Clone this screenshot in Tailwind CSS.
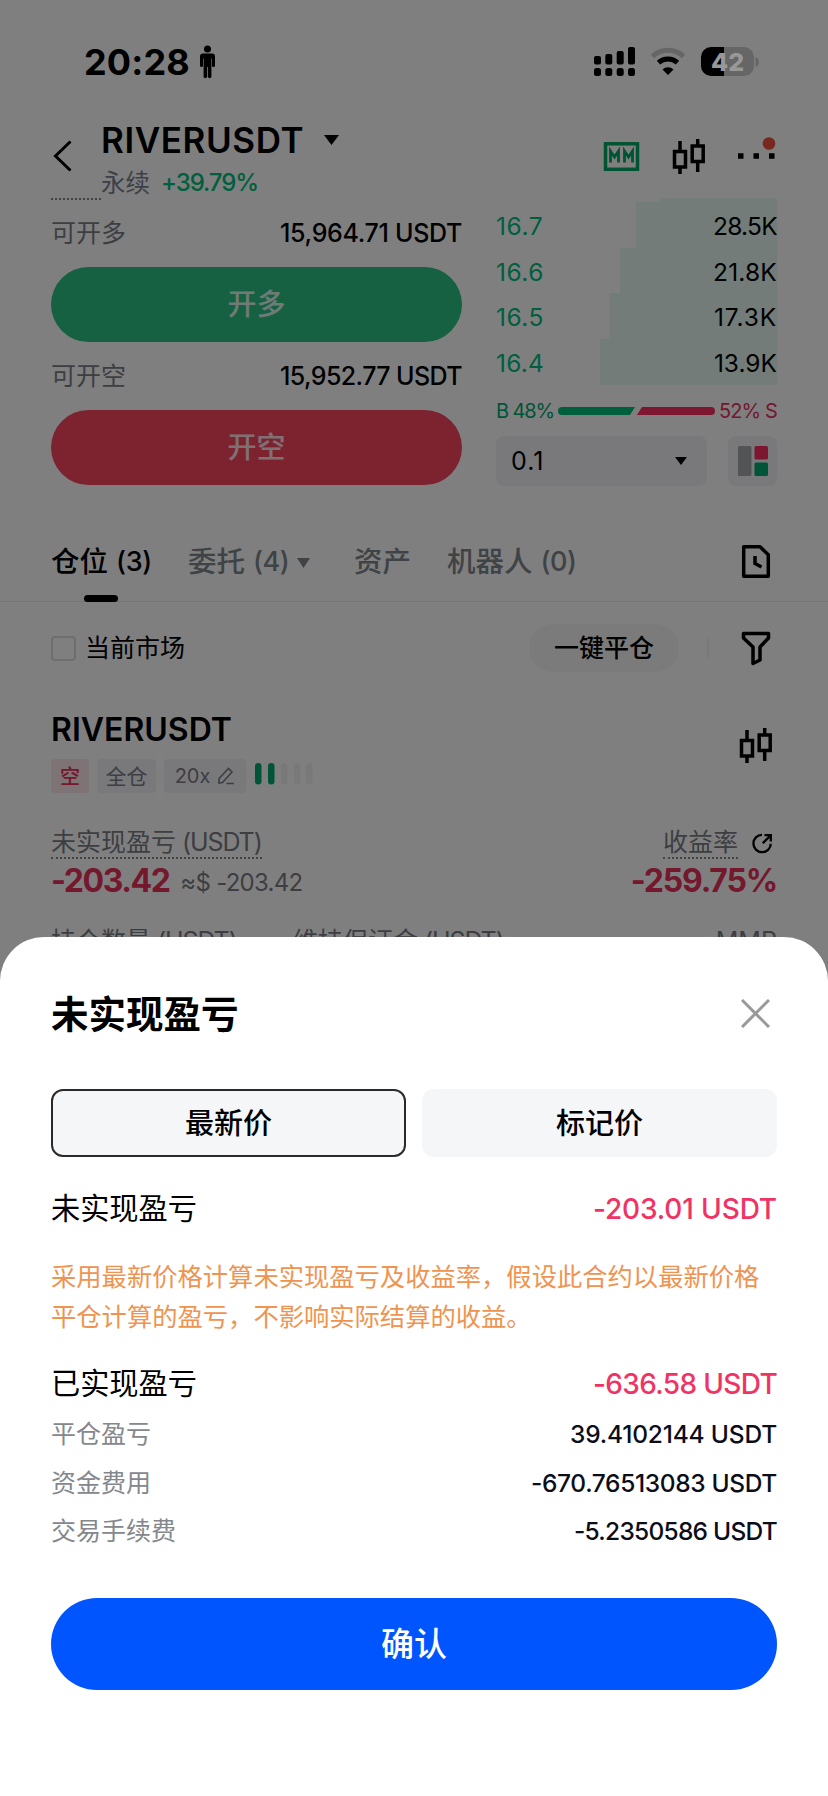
<!DOCTYPE html>
<html lang="zh-CN">
<head>
<meta charset="utf-8">
<title>RIVERUSDT</title>
<script src="https://cdn.jsdelivr.net/npm/@tailwindcss/browser@4"></script>
</head>
<body class="bg-white">
<div class="relative h-[1796px] w-[828px] overflow-hidden bg-white font-['Inter','Noto_Sans_CJK_SC',sans-serif] whitespace-nowrap text-black">

  <!-- Trading page -->
  <div class="flex h-[1000px] flex-col overflow-hidden">

    <!-- Status bar -->
    <div class="relative z-10 flex h-[110px] shrink-0 items-start pt-[42px] pl-[84px] pr-[69px]">
      <span class="text-[36px] leading-[40px] font-bold tracking-[0.18px]">20:28</span>
      <svg class="absolute left-[199px] top-[45px]" width="17" height="35" viewBox="0 0 17 35"><circle cx="8.500" cy="4" r="3.500"/><path d="M4 8.500h9a3 3 0 0 1 3 3v9a1.500 1.500 0 0 1-3 0v-7h-.6V32a1.900 1.900 0 0 1-3.500 0V22h-.8v10a1.900 1.900 0 0 1-3.500 0V13.500H4v7a1.500 1.500 0 0 1-3 0v-9a3 3 0 0 1 3-3z"/></svg>
      <svg class="ml-auto mt-[4px]" width="166" height="34" viewBox="593 46 166 34" fill="#000">
        <rect x="594" y="56" width="7" height="8.500" rx="2"/><rect x="605.300" y="54" width="7" height="10.500" rx="2"/><rect x="616.700" y="51" width="7" height="13.500" rx="2"/><rect x="628" y="47" width="7" height="17.500" rx="2"/>
        <rect x="594" y="68" width="7" height="8" rx="2.500"/><rect x="605.300" y="68" width="7" height="8" rx="2.500"/><rect x="616.700" y="68" width="7" height="8" rx="2.500"/><rect x="628" y="68" width="7" height="8" rx="2.500"/>
        <path d="M652.500 56.500a22.500 22.500 0 0 1 31 0" fill="none" stroke="#666" stroke-width="5"/>
        <path d="M658.500 62.700a14 14 0 0 1 19 0" fill="none" stroke="#000" stroke-width="5"/>
        <path d="M668 75l-5.500-5.600a8 8 0 0 1 11 0z"/>
        <path d="M711 47h13v29h-13a10 10 0 0 1-10-10v-9a10 10 0 0 1 10-10z"/>
        <path d="M724 47h20a10 10 0 0 1 10 10v9a10 10 0 0 1-10 10h-20z" fill="#666"/>
        <path d="M755.500 57c4.500 1.500 4.500 8.500 0 10z" fill="#666"/>
        <text x="727.500" y="71" text-anchor="middle" font-size="25" font-weight="800" fill="#989898">42</text>
      </svg>
    </div>

    <!-- Instrument header -->
    <div class="flex h-[88px] shrink-0 px-[51px]">
      <svg class="mt-[30px] shrink-0" width="22" height="32" viewBox="0 0 22 32" fill="none" stroke="#000" stroke-width="3"><path d="M19.500 1.500L4.500 16l15 14.500"/></svg>
      <div class="ml-[28px]">
        <div class="mt-[10px] flex h-[40px] items-center text-[35px] font-semibold tracking-[0.6px]"><span>RIVERUSDT</span>
          <svg class="ml-[20px]" width="15" height="10" viewBox="0 0 15 10"><path d="M0 0h15L7.500 10z"/></svg></div>
        <div class="mt-[3px] flex h-[40px] items-center text-[24.500px]"><span class="text-[#7a8090]">永续</span><span class="ml-[11px] text-[24px] font-medium tracking-[-1.08px] text-[#00be7c]">+39.79%</span></div>
      </div>
      <svg class="ml-auto mt-[24px] shrink-0" width="175" height="44" viewBox="602 134 175 44" fill="none" stroke="#000" stroke-width="3.500">
        <rect x="605.500" y="143.800" width="32" height="25.500" stroke="#00a868"/>
        <path d="M610.500 162.500v-11.500l4 6 4-6v11.500M624.500 162.500v-11.500l4 6 4-6v11.500" stroke="#00a868" stroke-width="2.800"/>
        <path d="M680 141v10.500m0 15.500v7M674.500 151.500h11V167h-11zM697.700 139v7m0 15.500V172M692.200 146h11v15.500h-11z"/>
        <path d="M738 156h5.500m10 0h5.500m10 0h5.500" stroke-width="5.500"/>
        <circle cx="769" cy="143.500" r="6.300" fill="#f0503e" stroke="none"/>
      </svg>
    </div>

    <!-- Order panel and book -->
    <div class="flex h-[322px] shrink-0 justify-between px-[51px]">
      <div class="w-[411px]">
        <div class="h-[2px] w-[50px] border-b-2 border-dotted border-[#888]"></div>
        <div class="flex h-[67px] items-center justify-between text-[25px]"><span class="text-[#7a7d85]">可开多</span><span class="tracking-[-0.31px] font-medium">15,964.71 USDT</span></div>
        <div class="flex h-[75px] items-center justify-center rounded-full bg-[#2ac284] pt-px text-[29px] font-medium text-white/85">开多</div>
        <div class="flex h-[68px] items-center justify-between pt-px text-[25px]"><span class="text-[#7a7d85]">可开空</span><span class="tracking-[-0.59px] font-medium">15,952.77 USDT</span></div>
        <div class="flex h-[75px] items-center justify-center rounded-full bg-[#fa4660] pt-px text-[29px] font-medium text-white/85">开空</div>
      </div>
      <div class="w-[281px] text-[24.500px]">
        <div class="ml-auto h-[4px] w-[117px] bg-[#e6f9f2]"></div>
        <div class="relative flex h-[46px] items-center justify-between pt-[3px]"><div class="absolute inset-y-0 right-0 w-[141px] bg-[#e6f9f2]"></div><span class="relative tracking-[0.6px] text-[#00be7c]">16.7</span><span class="relative tracking-[-0.72px]">28.5K</span></div>
        <div class="relative flex h-[45px] items-center justify-between pt-[3px]"><div class="absolute inset-y-0 right-0 w-[157px] bg-[#e6f9f2]"></div><span class="relative tracking-[0.5px] text-[#00be7c]">16.6</span><span class="relative tracking-[0.19px]">21.8K</span></div>
        <div class="relative flex h-[46px] items-center justify-between pt-[3px]"><div class="absolute inset-y-0 right-0 w-[168px] bg-[#e6f9f2]"></div><span class="relative tracking-[0.5px] text-[#00be7c]">16.5</span><span class="relative tracking-[0.85px]">17.3K</span></div>
        <div class="relative flex h-[46px] items-center justify-between pt-[3px]"><div class="absolute inset-y-0 right-0 w-[177px] bg-[#e6f9f2]"></div><span class="relative tracking-[0.2px] text-[#00be7c]">16.4</span><span class="relative">13.9K</span></div>
        <div class="flex h-[51px] items-center justify-between text-[20px]"><span class="tracking-[-1.1px] text-[#00a870]">B 48%</span>
          <svg class="shrink-0" width="157" height="8" viewBox="0 0 157 8"><path d="M4 0h73l-5 8H4a4 4 0 0 1 0-8z" fill="#00c07c"/><path d="M84 0h69a4 4 0 0 1 0 8H79z" fill="#fa2c60"/></svg>
          <span class="tracking-[-0.89px] text-[#e83060]">52% S</span></div>
        <div class="flex h-[50px] justify-between">
          <div class="flex w-[211px] items-center justify-between rounded-[8px] bg-[#f2f3f7] pl-[15px] pr-[20px] text-[25px]"><span class="mt-px tracking-[1px]">0.1</span><svg width="12" height="8" viewBox="0 0 12 8"><path d="M0 0h12L6 8z"/></svg></div>
          <div class="flex w-[49px] items-center justify-center rounded-[8px] bg-[#f2f3f7]"><svg width="30" height="30" viewBox="0 0 30 30"><rect width="13.500" height="30" rx="1.500" fill="#a6a8ac"/><rect x="16.500" width="13.500" height="13.500" rx="1.500" fill="#fa2c60"/><rect x="16.500" y="16.500" width="13.500" height="13.500" rx="1.500" fill="#00a870"/></svg></div>
        </div>
      </div>
    </div>

    <!-- Tabs -->
    <div class="flex h-[82px] shrink-0 border-b border-[#e6e6e6] px-[51px] pt-[4px] text-[28.500px] font-medium text-[#80868c]">
      <div class="relative flex w-[102px] items-center text-black"><span>仓位</span><span class="ml-[8px] text-[27px] tracking-[-0.3px]">(3)</span><div class="absolute -bottom-[1px] left-[33px] h-[7px] w-[34px] rounded-full bg-black"></div></div>
      <div class="ml-[35px] flex w-[122px] items-center"><span>委托</span><span class="ml-[8px] text-[27px] tracking-[-0.5px]">(4)</span><svg class="ml-auto" width="13" height="10" viewBox="0 0 13 10" fill="#80868c"><path d="M0 0h13L6.500 10z"/></svg></div>
      <div class="ml-[44px] flex w-[57px] items-center"><span>资产</span></div>
      <div class="ml-[36px] flex items-center"><span>机器人</span><span class="ml-[8px] text-[27px] tracking-[-0.4px]">(0)</span></div>
      <svg class="ml-auto mt-[20px] mr-[6px]" width="30" height="35" viewBox="0 0 30 35" fill="none" stroke="#000" stroke-width="3.500"><path d="M2.700 2.700H19l8.300 8v21.600H2.700z" stroke-linejoin="round"/><path d="M14 12v7.500l6.500 3.500"/></svg>
    </div>

    <!-- Filters -->
    <div class="flex h-[92px] shrink-0 items-center px-[51px]">
      <div class="h-[25px] w-[25px] rounded-[4px] border-2 border-[#dadde0]"></div>
      <span class="ml-[9px] mt-[2px] text-[25px]">当前市场</span>
      <div class="ml-auto flex h-[48px] w-[150px] items-center justify-center rounded-full bg-[#f6f6f6] pt-px text-[25px] font-medium">一键平仓</div>
      <div class="ml-[28px] h-[20px] w-[2px] bg-[#f2f2f2]"></div>
      <svg class="ml-[32px] mr-[6px]" width="30" height="35" viewBox="0 0 30 35" fill="none" stroke="#000" stroke-width="3.500" stroke-linejoin="round"><path d="M2.500 2.500h25v4.500l-8.500 9v13l-7 3.500V16L2.500 7z"/></svg>
    </div>

    <!-- Position card -->
    <div class="flex shrink-0 flex-col px-[51px]">
      <div class="flex h-[116px] justify-between">
        <div>
          <div class="mt-[16px] flex h-[40px] items-center text-[32px] font-semibold"><span>RIVERUSDT</span></div>
          <div class="mt-[9px] flex h-[34px] items-center text-[20px] text-[#7a7d85]">
            <div class="flex h-[34px] w-[38px] items-center justify-center rounded-[4px] bg-[#fde6ea] pt-px font-medium text-[#e8305c]">空</div>
            <div class="ml-[8px] flex h-[34px] w-[59px] items-center justify-center rounded-[4px] bg-[#f2f3f7] pt-px text-[21px]">全仓</div>
            <div class="ml-[8px] flex h-[34px] w-[82px] items-center justify-center gap-[7px] rounded-[4px] bg-[#f2f3f7]"><span class="[font-feature-settings:'calt'_0]">20x</span>
              <svg width="18" height="18" viewBox="0 0 18 18" fill="none" stroke="#7a7d85" stroke-width="1.600"><path d="M2 16v-4.500L11.500 1.500l3.500 3.500L5.500 15.500 2 16zM9.500 16.500H17"/></svg></div>
            <svg class="ml-[9px] mb-[4px]" width="60" height="22" viewBox="0 0 60 22"><rect width="6.500" height="21.500" rx="3.200" fill="#00a870"/><rect x="13" width="6.500" height="21.500" rx="3.200" fill="#00a870"/><g fill="#f3f3f3"><rect x="26" width="6.500" height="21.500" rx="3"/><rect x="39" width="6.500" height="21.500" rx="3"/><rect x="51" width="6.500" height="21.500" rx="3"/></g></svg>
          </div>
        </div>
        <svg class="mt-[33px] mr-[4px]" width="34" height="38" viewBox="672 138 34 38" fill="none" stroke="#000" stroke-width="3.500"><path d="M680 141v10.500m0 15.500v7M674.500 151.500h11V167h-11zM697.700 139v7m0 15.500V172M692.200 146h11v15.500h-11z"/></svg>
      </div>
      <div class="mt-[7px] flex h-[42px] items-end justify-between text-[25px] leading-[30px] text-[#7a7d85]">
        <div class="border-b-2 border-dotted border-[#888]">未实现盈亏<span class="tracking-[-1.1px]"> (USDT)</span></div>
        <div class="flex items-center"><span class="border-b-2 border-dotted border-[#888]">收益率</span>
          <svg class="ml-[14px] mr-[4px]" width="21" height="21" viewBox="0 0 21 21" fill="none" stroke="#000" stroke-width="2.300"><path d="M10 1.800a8.700 8.700 0 1 0 8.800 9M12.500 2.200h6.300v6.300M18.800 2.200l-8 8"/></svg></div>
      </div>
      <div class="flex h-[46px] items-center justify-between pb-[2px] text-[32px] font-bold text-[#e8305c]">
        <div class="flex items-center"><span class="tracking-[-1.45px]">-203.42</span><span class="ml-[11px] mt-[4px] text-[24px] font-normal tracking-[-0.74px] text-[#7a7d85]">≈$ -203.42</span></div>
        <span class="tracking-[-1.2px]">-259.75%</span>
      </div>
      <div class="mt-[7px] grid h-[60px] grid-cols-[242px_1fr_auto] items-center text-[25px] text-[#7a7d85]"><div>持仓数量<span class="tracking-[-1.1px]"> (USDT)</span></div><div>维持保证金<span class="tracking-[-1.1px]"> (USDT)</span></div><span>MMR</span></div>
    </div>
  </div>

  <!-- Scrim -->
  <div class="absolute inset-0 bg-black/50"></div>

  <!-- Bottom sheet -->
  <div class="absolute inset-x-0 bottom-0 h-[859px] rounded-t-[44px] bg-white px-[51px]">
    <div class="flex h-[152px] items-center justify-between pr-[7px]">
      <span class="mt-[4px] text-[37.500px] font-semibold">未实现盈亏</span>
      <svg width="29" height="29" viewBox="0 0 29 29" stroke="#999" stroke-width="3"><path d="M1 1l27 27M28 1L1 28"/></svg>
    </div>
    <div class="grid h-[68px] grid-cols-2 gap-[16px] text-[29px] font-medium">
      <div class="flex items-center justify-center rounded-[12px] border-2 border-[#2a2a2a] bg-[#f4f6f8] pt-[2px]">最新价</div>
      <div class="flex items-center justify-center rounded-[12px] bg-[#f4f6f8] pt-[2px]">标记价</div>
    </div>
    <div class="mt-[22px] flex h-[60px] items-center justify-between text-[29.200px]"><span>未实现盈亏</span><span class="text-[28px] font-medium tracking-[-0.14px] text-[#f03364]">-203.01 USDT</span></div>
    <p class="mt-[18px] text-[25.300px] leading-[40px] text-[#ef9450]">采用最新价格计算未实现盈亏及收益率，假设此合约以最新价格<br>平仓计算的盈亏，不影响实际结算的收益。</p>
    <div class="mt-[17px] flex h-[60px] items-center justify-between text-[29.200px]"><span>已实现盈亏</span><span class="text-[28px] font-medium tracking-[-0.66px] text-[#f03364]">-636.58 USDT</span></div>
    <div class="-mt-[4px] text-[25px] leading-[48.500px] text-[#84888d]">
      <div class="flex justify-between"><span>平仓盈亏</span><span class="text-[24.500px] font-medium tracking-[-0.19px] text-[#0b0e18]">39.4102144 USDT</span></div>
      <div class="flex justify-between"><span>资金费用</span><span class="text-[24.500px] font-medium tracking-[-0.35px] text-[#0b0e18]">-670.76513083 USDT</span></div>
      <div class="flex justify-between"><span>交易手续费</span><span class="text-[24.500px] font-medium tracking-[-0.74px] text-[#0b0e18]">-5.2350586 USDT</span></div>
    </div>
    <div class="mt-[42px] flex h-[92px] items-center justify-center rounded-full bg-[#0055ff] pt-[3px] text-[33px] font-medium text-white">确认</div>
  </div>
</div>
</body>
</html>
